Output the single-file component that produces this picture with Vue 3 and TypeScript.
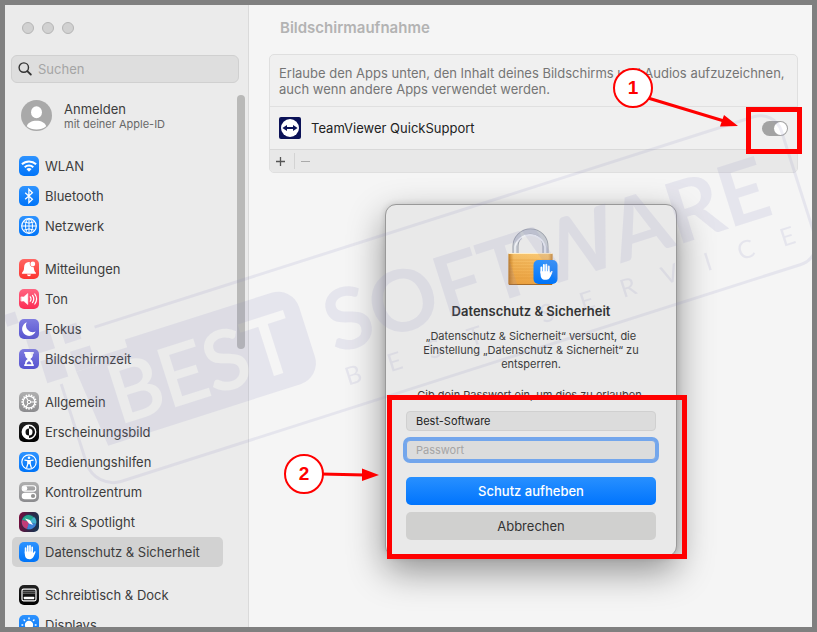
<script setup lang="ts">
import { ref } from 'vue'

interface NavItem {
  id: string
  label: string
  tile: string
}

const groups: NavItem[][] = [
  [
    { id: 'wifi', label: 'WLAN', tile: 'blue' },
    { id: 'bluetooth', label: 'Bluetooth', tile: 'blue' },
    { id: 'network', label: 'Netzwerk', tile: 'blue' },
  ],
  [
    { id: 'bell', label: 'Mitteilungen', tile: 'red' },
    { id: 'sound', label: 'Ton', tile: 'pink' },
    { id: 'moon', label: 'Fokus', tile: 'indigo' },
    { id: 'hourglass', label: 'Bildschirmzeit', tile: 'indigo' },
  ],
  [
    { id: 'gear', label: 'Allgemein', tile: 'gray' },
    { id: 'appearance', label: 'Erscheinungsbild', tile: 'black' },
    { id: 'access', label: 'Bedienungshilfen', tile: 'blue' },
    { id: 'control', label: 'Kontrollzentrum', tile: 'gray' },
    { id: 'siri', label: 'Siri & Spotlight', tile: 'siri' },
    { id: 'hand', label: 'Datenschutz & Sicherheit', tile: 'blue' },
  ],
  [
    { id: 'dock', label: 'Schreibtisch & Dock', tile: 'black' },
    { id: 'display', label: 'Displays', tile: 'blue' },
  ],
]

const active = ref('hand')
const query = ref('')
const allowed = ref(true)
const user = ref('Best-Software')
const password = ref('')
const teeth = Array.from({ length: 16 }, (_, i) => i * 22.5)
const rays = Array.from({ length: 8 }, (_, i) => i * 45)
</script>

<template>
  <div class="screen">
    <aside class="sidebar">
      <div class="lights"><i></i><i></i><i></i></div>
      <label class="search">
        <svg width="14" height="14" viewBox="0 0 14 14" fill="none" stroke="#333" stroke-linecap="round">
          <circle cx="5.8" cy="5.6" r="4.7" stroke-width="1.4" />
          <path d="M9.3 9.1 12.8 12.5" stroke-width="1.8" />
        </svg>
        <input v-model="query" type="search" placeholder="Suchen" aria-label="Suchen" />
      </label>
      <a href="#" class="account">
        <svg width="31" height="31" viewBox="0 0 31 31">
          <circle cx="15.500" cy="15.500" r="15.500" fill="#a9a9a9" />
          <ellipse cx="15.500" cy="12.200" rx="5.500" ry="6" fill="#fff" />
          <path d="M5.800 26.200c1-3.500 5-5.400 9.700-5.400s8.700 1.900 9.700 5.400c-2.600 2.300-6 3.300-9.700 3.300s-7.100-1-9.700-3.300z" fill="#fff" />
        </svg>
        <span class="who">
          <span class="name">Anmelden</span>
          <span class="sub">mit deiner Apple-ID</span>
        </span>
      </a>
      <nav class="nav">
        <ul v-for="(group, g) in groups" :key="g">
          <li v-for="item in group" :key="item.id">
            <a href="#" :class="{ active: item.id === active }" @click.prevent="active = item.id">
              <span class="tile" :class="item.tile">
                <svg v-if="item.id === 'wifi'" viewBox="0 0 20 20" fill="none" stroke="#fff" stroke-width="2">
                  <path d="M2.900 8.300a10.300 10.300 0 0 1 14.200 0M5.700 11.300a6.300 6.300 0 0 1 8.600 0" />
                  <path d="M7.400 13.100a3.900 3.900 0 0 1 5.200 0L10 15.800z" fill="#fff" stroke="none" />
                </svg>
                <svg v-else-if="item.id === 'bluetooth'" viewBox="0 0 20 20" fill="none" stroke="#fff" stroke-width="1.300">
                  <path d="M6.200 6.700 13.400 13.200 9.900 16.600V3.400l3.500 3.400-7.200 6.500" />
                </svg>
                <svg v-else-if="item.id === 'network'" viewBox="0 0 20 20" fill="none" stroke="#fff" stroke-width="1">
                  <circle cx="10" cy="10" r="7.300" stroke-width="1.200" />
                  <ellipse cx="10" cy="10" rx="3.500" ry="7.300" />
                  <path d="M10 2.700v14.600M2.700 10h14.600M4.200 5.700q5.800 2.800 11.600 0M4.200 14.300q5.800-2.800 11.600 0" />
                </svg>
                <svg v-else-if="item.id === 'bell'" viewBox="0 0 20 20" fill="#fff">
                  <path d="M9.800 3c-3 0-4.600 2.200-4.700 5-.1 3-.4 3.900-1.900 5.400-.6.600-.3 1.300.4 1.300h12.700c.7 0 1-.7.400-1.300-1.500-1.500-1.700-2.400-1.900-5.200A3.600 3.600 0 0 1 11 3.200 5 5 0 0 0 9.800 3zM8 15.600h4c-.2 1-1 1.600-2 1.600s-1.800-.6-2-1.600z" />
                  <circle cx="13.800" cy="5" r="2.400" />
                </svg>
                <svg v-else-if="item.id === 'sound'" viewBox="0 0 20 20" fill="none" stroke="#fff" stroke-width="1.200" stroke-linecap="round">
                  <path d="M2.300 7.900h2.500l4-3.400v11l-4-3.400H2.300z" fill="#fff" stroke-width=".6" />
                  <path d="M11.300 7.800q1.500 2.200 0 4.400M13.500 6.400q2.600 3.600 0 7.200M15.800 5q3.600 5 0 10" />
                </svg>
                <svg v-else-if="item.id === 'moon'" viewBox="0 0 20 20" fill="#fff">
                  <path d="M7.800 3.300a7 7 0 1 0 8.800 9.300 6.800 6.800 0 0 1-8.800-9.300z" />
                </svg>
                <svg v-else-if="item.id === 'hourglass'" viewBox="0 0 20 20">
                  <path d="M5.200 3h9.600v1.800h-.8c0 2.700-.8 3.900-2.700 5.200 1.900 1.300 2.700 2.500 2.700 5.200h.8V17H5.200v-1.800H6c0-2.700.8-3.900 2.700-5.200C6.800 8.700 6 7.500 6 4.800h-.8z" fill="#fff" />
                  <path d="M7.500 15.200c.3-1.600 1.200-2.500 2.500-3.300 1.300.8 2.200 1.700 2.500 3.300z" fill="#6662d3" />
                </svg>
                <svg v-else-if="item.id === 'gear'" viewBox="0 0 20 20" fill="none" stroke="#fff">
                  <circle cx="10" cy="10" r="5.900" stroke-width="1.300" />
                  <path v-for="a in teeth" :key="a" d="M10 4V2.300" stroke-width="1.400" :transform="`rotate(${a} 10 10)`" />
                  <circle cx="10" cy="10" r="1.700" />
                  <path d="M11.700 10h4.200M9.100 8.500 7 4.900M9.100 11.500 7 15.100" stroke-width="1.100" />
                </svg>
                <svg v-else-if="item.id === 'appearance'" viewBox="0 0 20 20">
                  <circle cx="10" cy="10" r="6.700" fill="none" stroke="#fff" stroke-width="1.400" />
                  <path d="M10 3.300a6.700 6.700 0 0 0 0 13.400v-3.200a3.500 3.500 0 0 1 0-7z" fill="#fff" />
                  <path d="M10 6.500a3.500 3.500 0 0 1 0 7z" fill="#fff" />
                </svg>
                <svg v-else-if="item.id === 'access'" viewBox="0 0 20 20" fill="none" stroke="#fff">
                  <circle cx="10" cy="10" r="7.200" stroke-width="1.200" />
                  <circle cx="10" cy="5.800" r="1.300" fill="#fff" stroke="none" />
                  <path d="M5.900 8.100 8.600 8.700h2.800l2.700-.6M10 9v2.500M8.800 9v3l-1.100 3.500M11.200 9v3l1.100 3.500" stroke-width="1.300" stroke-linecap="round" />
                </svg>
                <svg v-else-if="item.id === 'control'" viewBox="0 0 20 20">
                  <rect x="3.200" y="3.700" width="13.600" height="5.400" rx="2.700" fill="none" stroke="#fff" stroke-width="1.100" />
                  <circle cx="6" cy="6.400" r="2.300" fill="#fff" />
                  <rect x="2.700" y="10.800" width="14.600" height="6.400" rx="3.200" fill="#fff" />
                  <circle cx="14" cy="14" r="2.100" fill="#929292" />
                </svg>
                <svg v-else-if="item.id === 'siri'" viewBox="0 0 20 20">
                  <circle cx="10" cy="10" r="7.800" fill="#243f62" />
                  <path d="M3 8c2-5 8-7 12-2l-5 4z" fill="#28a58e" />
                  <path d="M3 8c-1 4 1 8 5 9l3-7z" fill="#c33c78" />
                  <path d="M8 17c4 1 8-1 9-5l-7-2z" fill="#3d83d8" />
                  <path d="M17 12c1-3 0-5-2-7l-5 5z" fill="#44b3cf" />
                  <path d="M6 6.500 11 8l3 5-4-1.500z" fill="#fff" />
                </svg>
                <svg v-else-if="item.id === 'hand'" viewBox="0 0 20 20" fill="none" stroke="#fff" stroke-linecap="round">
                  <path d="M6.600 11V6.200M8.800 10V4M11 10V3.800M13.200 11V5.400" stroke-width="1.700" />
                  <path d="M5.800 9.500h8.200v1.800l1.300-1.700c.6-.7 1.600-.2 1.200.7-.9 2.300-1.700 4.500-2.900 5.700-2 2-5.900 1.600-7.100-.7-.7-1.400-.7-3.600-.7-5.800z" fill="#fff" stroke="none" />
                </svg>
                <svg v-else-if="item.id === 'dock'" viewBox="0 0 20 20">
                  <rect x="3" y="4.200" width="14" height="11.600" rx="1.500" fill="none" stroke="#fff" stroke-width="1.200" />
                  <path d="M4 6.300h12M4 8.200h12" stroke="#aaa" stroke-width=".7" />
                  <rect x="4.800" y="11.800" width="10.400" height="2.500" rx=".5" fill="#fff" />
                </svg>
                <svg v-else viewBox="0 0 20 20" fill="#fff" stroke="#fff" stroke-width="1.500" stroke-linecap="round">
                  <circle cx="10" cy="10" r="3.400" />
                  <path v-for="a in rays" :key="a" d="M10 3.700V3" :transform="`rotate(${a} 10 10)`" />
                </svg>
              </span>
              {{ item.label }}
            </a>
          </li>
        </ul>
      </nav>
      <div class="scrollbar"></div>
    </aside>

    <main class="content">
      <h1>Bildschirmaufnahme</h1>
      <section class="card">
        <p>Erlaube den Apps unten, den Inhalt deines Bildschirms und Audios aufzuzeichnen, auch wenn andere Apps verwendet werden.</p>
        <label class="app">
          <svg width="22" height="22" viewBox="0 0 22 22">
            <rect width="22" height="22" rx="2" fill="#0b1257" />
            <circle cx="11" cy="11" r="9" fill="#fff" />
            <path d="M3.400 11 8 8v2h6V8l4.600 3L14 14v-2H8v2z" fill="#0b1257" />
          </svg>
          <span>TeamViewer QuickSupport</span>
          <input v-model="allowed" type="checkbox" role="switch" />
        </label>
        <footer>
          <button type="button" aria-label="App hinzufügen">
            <svg width="9" height="9" viewBox="0 0 9 9"><path d="M4.500 0v9M0 4.500h9" stroke="#555" stroke-width="1.300" /></svg>
          </button>
          <button type="button" aria-label="App entfernen">
            <svg width="9" height="9" viewBox="0 0 9 9"><path d="M0 4.500h9" stroke="#aaa" stroke-width="1.200" /></svg>
          </button>
        </footer>
      </section>

      <div class="overlay">
        <form class="dialog" role="dialog" aria-labelledby="dialog-title" @submit.prevent>
          <svg class="lock" width="60" height="60" viewBox="0 0 60 60">
            <defs>
              <linearGradient id="brass" x1="0" y1="0" x2="0" y2="1">
                <stop offset="0" stop-color="#fac974" />
                <stop offset=".5" stop-color="#f4b659" />
                <stop offset="1" stop-color="#eda240" />
              </linearGradient>
              <linearGradient id="brass-side" x1="0" y1="0" x2="1" y2="0">
                <stop offset="0" stop-color="#a86210" stop-opacity=".75" />
                <stop offset=".12" stop-color="#c47a1c" stop-opacity=".1" />
                <stop offset=".9" stop-color="#c47a1c" stop-opacity="0" />
                <stop offset="1" stop-color="#a86210" stop-opacity=".6" />
              </linearGradient>
              <linearGradient id="badge" x1="0" y1="0" x2="0" y2="1">
                <stop offset="0" stop-color="#2e93ff" />
                <stop offset="1" stop-color="#0074f8" />
              </linearGradient>
            </defs>
            <path d="M14.500 28V19.500a15 15 0 0 1 30 0V28" fill="none" stroke="#979ca6" stroke-width="6" />
            <path d="M14.500 28V19.500a15 15 0 0 1 30 0V28" fill="none" stroke="#c6cad2" stroke-width="4.400" />
            <path d="M14 28V19.500a15.500 15.500 0 0 1 30 0V28" fill="none" stroke="#eef0f4" stroke-width="1.600" />
            <rect x="7.500" y="26" width="44" height="32" rx="1.500" fill="url(#brass)" />
            <path d="M8 33h43M8 36h43M8 39h43M8 42h43M8 45h43M8 48h43M8 51h43" stroke="#e29a3a" stroke-width=".5" />
            <rect x="7.500" y="26" width="44" height="32" rx="1.500" fill="url(#brass-side)" />
            <path d="M8 26.500h43" stroke="#ffedc5" />
            <path d="M8 57.500h43" stroke="#a66b28" />
            <rect x="32.500" y="33" width="24" height="24" rx="5" fill="url(#badge)" />
            <g transform="translate(33 33.500) scale(1.120)" fill="none" stroke="#fff" stroke-linecap="round">
              <path d="M6.600 11V6.200M8.800 10V4M11 10V3.800M13.200 11V5.400" stroke-width="1.700" />
              <path d="M5.800 9.500h8.200v1.800l1.300-1.700c.6-.7 1.600-.2 1.200.7-.9 2.300-1.700 4.500-2.900 5.700-2 2-5.900 1.600-7.100-.7-.7-1.400-.7-3.600-.7-5.800z" fill="#fff" stroke="none" />
            </g>
          </svg>
          <h2 id="dialog-title">Datenschutz &amp; Sicherheit</h2>
          <p>„Datenschutz &amp; Sicherheit“ versucht, die Einstellung „Datenschutz &amp; Sicherheit“ zu entsperren.</p>
          <p>Gib dein Passwort ein, um dies zu erlauben.</p>
          <input v-model="user" type="text" aria-label="Benutzername" />
          <input v-model="password" class="focused" type="password" placeholder="Passwort" aria-label="Passwort" />
          <button type="submit" class="primary">Schutz aufheben</button>
          <button type="button" class="secondary">Abbrechen</button>
        </form>
      </div>
    </main>

    <svg class="layer" viewBox="0 0 817 632" preserveAspectRatio="xMinYMin meet">
      <defs>
        <mask id="cutout" maskUnits="userSpaceOnUse" x="-20" y="-60" width="900" height="260">
          <rect x="-20" y="-60" width="900" height="260" fill="#fff" />
          <text x="91" y="107" class="panel-word">BEST</text>
        </mask>
      </defs>
      <g class="stamp" transform="translate(0 350) rotate(-17.700)">
        <path d="M97 7H789a22 22 0 0 1 22 22V140a22 22 0 0 1-22 22H76a28 28 0 0 1-28-28V51" fill="none" stroke-width="3" class="frame" />
        <path d="M66 44h22v-8h34v-8H276a22 22 0 0 1 22 22V102a22 22 0 0 1-22 22H74z" mask="url(#cutout)" />
        <path d="M14-32h12v12h-12zM28-5h25v20H28zM64-3h17v17H64zM35 23h22v23H35zM66 23h21v21H66z" />
        <text x="318" y="106" class="brand">SOFTWARE</text>
        <text x="321" y="140" class="claim">BEST SERVICE</text>
      </g>
    </svg>

    <svg class="layer" viewBox="0 0 817 632" preserveAspectRatio="xMinYMin meet">
      <g fill="none" stroke="#f00" stroke-width="5">
        <rect x="748.500" y="109.500" width="51" height="42" />
        <rect x="389.500" y="397.500" width="295" height="159" />
      </g>
      <g stroke="#f00" stroke-width="3">
        <path d="M648 98 724 121M321 474 365 475" />
      </g>
      <path d="M738 126 720 126.500 724 115zM379 475 362 468.500V481z" fill="#f00" />
      <g fill="#fff" stroke="#f00" stroke-width="2">
        <circle cx="633" cy="88" r="19" />
        <circle cx="304" cy="474" r="19" />
      </g>
      <g class="digits">
        <text x="633" y="94">1</text>
        <text x="304" y="480">2</text>
      </g>
    </svg>
  </div>
</template>

<style>
body {
  margin: 0;
}
</style>

<style scoped>
.screen {
  position: relative;
  display: flex;
  box-sizing: border-box;
  height: 100vh;
  border: 5px solid #808080;
  overflow: hidden;
  background: #f5f5f5;
  font-family: Inter, "Liberation Sans", sans-serif;
  font-size: 13px;
  line-height: 16px;
  color: #3c3c3c;
}
.sidebar {
  position: relative;
  display: flex;
  flex-direction: column;
  flex: none;
  box-sizing: border-box;
  width: 244px;
  padding: 17px 9px 0 6px;
  border-right: 1px solid #dadada;
  background: #ebebeb;
  overflow: hidden;
}
.lights {
  display: flex;
  flex: none;
  gap: 8px;
  padding: 0 11px;
}
.lights i {
  box-sizing: border-box;
  width: 12px;
  height: 12px;
  border: 1px solid #b5b5b5;
  border-radius: 50%;
  background: #d1d1d1;
}
.search {
  display: flex;
  flex: none;
  align-items: center;
  gap: 6px;
  box-sizing: border-box;
  height: 28px;
  margin-top: 21px;
  padding: 0 6px;
  border: 1px solid #d0d0d0;
  border-radius: 6px;
  background: #dedede;
}
input {
  min-width: 0;
  font: inherit;
  color: #222;
  outline: none;
}
.search input {
  flex: 1;
  padding: 0;
  border: 0;
  background: none;
}
input::placeholder {
  color: #a5a5a5;
  opacity: 1;
}
a {
  color: inherit;
  text-decoration: none;
}
.account {
  display: flex;
  flex: none;
  align-items: center;
  gap: 12px;
  margin-top: 17px;
  padding: 0 10px;
}
.who {
  display: flex;
  flex-direction: column;
}
.sub {
  font-size: 11px;
  line-height: 14px;
  color: #686868;
}
.nav {
  display: flex;
  flex: none;
  flex-direction: column;
  gap: 13px;
  margin-top: 20px;
}
.nav ul {
  margin: 0;
  padding: 0;
  list-style: none;
}
.nav a {
  display: flex;
  align-items: center;
  gap: 6px;
  height: 30px;
  margin: 0 16px 0 1px;
  padding: 0 7px;
  border-radius: 5px;
}
.nav a.active {
  background: #d2d2d2;
}
.tile {
  width: 20px;
  height: 20px;
  border-radius: 5px;
  overflow: hidden;
}
.tile svg {
  display: block;
  width: 20px;
  height: 20px;
}
.blue {
  background: linear-gradient(#2e93ff, #0074f8);
}
.red {
  background: linear-gradient(#ff6663, #fc342f);
}
.pink {
  background: linear-gradient(#ff6480, #fc2d55);
}
.indigo {
  background: linear-gradient(#7f7ce0, #5653cf);
}
.gray {
  background: linear-gradient(#b0b0b0, #8b8b8e);
}
.black {
  background: linear-gradient(#222, #000);
}
.siri {
  background: linear-gradient(100deg, #7c0b3c, #352446 55%, #123a55);
}
.scrollbar {
  position: absolute;
  top: 90px;
  right: 3px;
  width: 8px;
  height: 254px;
  border-radius: 4px;
  background: #b9b9b8;
}
.content {
  position: relative;
  flex: 1;
  min-width: 0;
  padding: 14px 14px 0 20px;
}
h1 {
  margin: 0 11px;
  font-size: 15px;
  line-height: 18px;
  font-weight: 600;
  color: #b3b3b3;
}
.card {
  margin-top: 17px;
  border: 1px solid #dfdfdf;
  border-radius: 5px;
  background: #f0f0f0;
  overflow: hidden;
}
.card p {
  margin: 0;
  padding: 10px 9px 9px;
  color: #757575;
}
.app {
  display: flex;
  align-items: center;
  gap: 10px;
  height: 42px;
  padding: 0 9px;
  border-top: 1px solid #e0e0e0;
  color: #222;
}
.app input {
  appearance: none;
  width: 26px;
  height: 15px;
  margin: 0 0 0 auto;
  padding: 1px;
  border-radius: 8px;
  background: #a3a3a3;
}
.app input::before {
  content: "";
  display: block;
  width: 13px;
  height: 13px;
  border-radius: 50%;
  background: #fff;
}
.app input:checked::before {
  margin-left: auto;
}
.card footer {
  display: flex;
  align-items: center;
  height: 22px;
  border-top: 1px solid #d9d9d9;
  background: #e8e8e8;
}
.card footer button {
  display: flex;
  align-items: center;
  justify-content: center;
  box-sizing: border-box;
  width: 24px;
  height: 16px;
  padding: 0 3px 0 0;
  border: 0;
  background: none;
}
.card footer button + button {
  border-left: 1px solid #d3d3d3;
}
.overlay {
  position: absolute;
  inset: 0;
  display: flex;
  align-items: flex-start;
  justify-content: center;
  padding: 199px 0 0 1px;
}
.dialog {
  display: flex;
  flex-direction: column;
  align-items: center;
  box-sizing: border-box;
  width: 292px;
  padding: 22px 20px 16px;
  border: 1px solid #999;
  border-radius: 11px;
  background: #e9e9e9;
  box-shadow: 0 14px 36px rgba(0, 0, 0, 0.42), 0 0 6px rgba(0, 0, 0, 0.15);
  text-align: center;
  font-size: 11px;
  line-height: 14px;
}
h2 {
  margin: 16px 0 10px;
  font-size: 13px;
  line-height: 16px;
  font-weight: 600;
  color: #333;
}
.dialog p {
  width: 230px;
  margin: 0 0 17px;
}
.dialog input {
  box-sizing: border-box;
  align-self: stretch;
  height: 20px;
  padding: 0 9px;
  border: 1px solid #d0d0d0;
  border-radius: 4px;
  background: #dcdcdc;
}
.dialog p + input {
  margin-top: -8px;
}
.dialog .focused {
  margin-top: 9px;
  border-color: #73a6ec;
  box-shadow: 0 0 0 3px #73a6ec;
}
.dialog button {
  align-self: stretch;
  height: 28px;
  padding: 0;
  border: 0;
  border-radius: 5px;
  font: inherit;
  font-size: 13px;
  line-height: 16px;
}
.dialog .primary {
  margin-top: 17px;
  background: linear-gradient(#2890ff, #0074fd);
  color: #fff;
  font-weight: 500;
}
.dialog .secondary {
  margin-top: 7px;
  background: #d0d0cf;
  color: #333;
}
.layer {
  position: absolute;
  top: -5px;
  left: -5px;
  width: 100vw;
  height: 100vh;
  pointer-events: none;
}
.stamp {
  fill: #8c8abe;
  opacity: 0.14;
  font-family: Lato, "Open Sans", sans-serif;
}
.stamp .frame {
  fill: none;
  stroke: #8c8abe;
}
.brand {
  font-size: 85px;
  font-weight: 700;
}
.panel-word {
  fill: #000;
  stroke: #000;
  stroke-width: 2px;
  font-family: Lato, "Open Sans", sans-serif;
  font-size: 81px;
}
.claim {
  font-size: 25px;
  letter-spacing: 28px;
}
.digits {
  fill: #f00;
  font-family: "Liberation Sans", sans-serif;
  font-size: 19px;
  font-weight: 700;
  text-anchor: middle;
}
</style>
